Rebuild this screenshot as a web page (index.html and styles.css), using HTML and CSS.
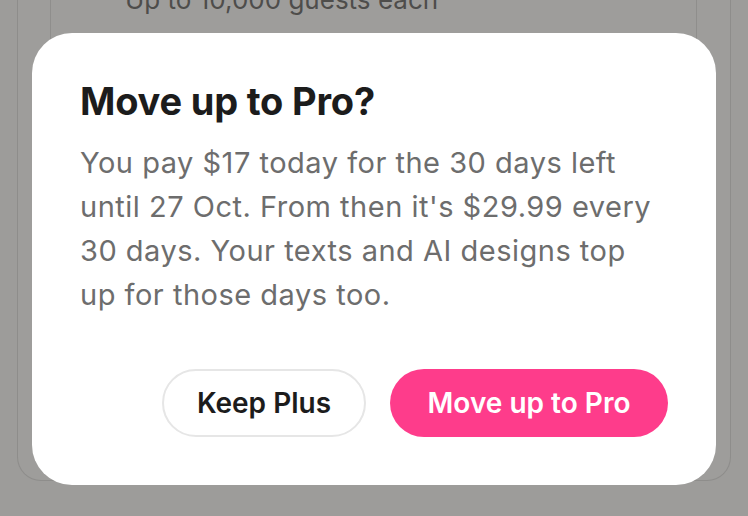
FILE: index.html
```html
<!DOCTYPE html>
<html lang="en">
<head>
<meta charset="utf-8">
<title>Move up to Pro?</title>
<link rel="stylesheet" href="styles.css">
</head>
<body>
  <div class="page">
    <div class="outer-card">
      <div class="plan-card">
        <p class="plan-note">Up to 10,000 guests each</p>
      </div>
    </div>
  </div>
  <div class="overlay">
    <div class="modal" role="dialog" aria-labelledby="modal-title">
      <h2 id="modal-title" class="modal-title">Move up to Pro?</h2>
      <p class="modal-text">You pay $17 today for the 30 days left until 27 Oct. From then it's $29.99 every 30 days. Your texts and AI designs top up for those days too.</p>
      <div class="modal-actions">
        <button class="btn btn-secondary">Keep Plus</button>
        <button class="btn btn-primary">Move up to Pro</button>
      </div>
    </div>
  </div>
</body>
</html>
```

FILE: styles.css
```css
* { box-sizing: border-box; }

html, body {
  margin: 0;
  padding: 0;
  width: 748px;
  height: 516px;
  overflow: hidden;
}

body {
  background: #9d9c9a;
  font-family: Inter, "Noto Sans", "Liberation Sans", sans-serif;
  position: relative;
}

.page {
  padding: 0 17px;
}

.outer-card {
  height: 497px;
  border: 1.5px solid #8e8d8b;
  border-top: none;
  border-radius: 0 0 24px 24px;
  background: #9e9d9b;
  padding-left: 32px;
  padding-right: 33px;
}

.plan-card {
  height: 120px;
  border: 1.5px solid #8f8e8c;
  border-top: none;
  padding-left: 74px;
}

.plan-note {
  margin: -16px 0 0;
  font-size: 26px;
  line-height: 32px;
  color: #4e4d4b;
}

.overlay {
  position: absolute;
  inset: 0;
}

.modal {
  position: absolute;
  left: 32px;
  top: 33px;
  width: 684px;
  height: 452px;
  background: #ffffff;
  border-radius: 40px;
  padding: 45px 48px 48px;
  display: flex;
  flex-direction: column;
}

.modal-title {
  margin: 0;
  font-size: 38px;
  line-height: 46px;
  font-weight: 700;
  color: #1c1c1c;
  letter-spacing: -0.2px;
}

.modal-text {
  margin: 16.5px 0 0;
  max-width: 580px;
  font-size: 29px;
  line-height: 44px;
  letter-spacing: 0.5px;
  color: #6d6d6d;
}

.modal-actions {
  margin-top: auto;
  display: flex;
  justify-content: flex-end;
  gap: 24px;
}

.btn {
  height: 68px;
  border-radius: 34px;
  font-family: inherit;
  font-size: 28px;
  font-weight: 600;
  padding: 0;
  white-space: nowrap;
  cursor: pointer;
}

.btn-secondary {
  width: 204px;
  background: #ffffff;
  border: 2px solid #e6e6e6;
  color: #1c1c1c;
}

.btn-primary {
  width: 278px;
  background: #fe3c8b;
  border: none;
  color: #ffffff;
}
```
